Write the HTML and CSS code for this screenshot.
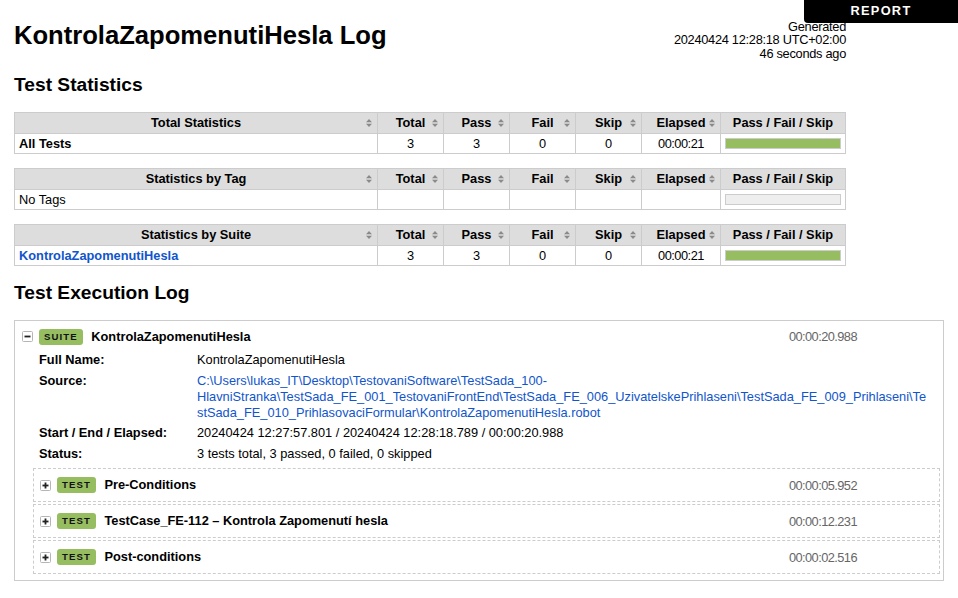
FILE: index.html
```html
<!DOCTYPE html>
<html lang="cs">
<head>
<meta charset="utf-8">
<title>KontrolaZapomenutiHesla Log</title>
<link rel="stylesheet" href="styles.css">
</head>
<body>
<div class="report-link"><a href="#">REPORT</a></div>

<div class="header">
  <h1>KontrolaZapomenutiHesla Log</h1>
  <div class="generated">Generated<br>20240424 12:28:18 UTC+02:00<br>46 seconds ago</div>
</div>

<h2>Test Statistics</h2>

<table class="statistics">
  <thead>
    <tr>
      <th class="sortable">Total Statistics<svg class="sort-icon" viewBox="0 0 6 8"><path d="M0 3.3L3 0 6 3.3Z M0 4.7L3 8 6 4.7Z"/></svg></th>
      <th class="sortable col-stat">Total<svg class="sort-icon" viewBox="0 0 6 8"><path d="M0 3.3L3 0 6 3.3Z M0 4.7L3 8 6 4.7Z"/></svg></th>
      <th class="sortable col-stat">Pass<svg class="sort-icon" viewBox="0 0 6 8"><path d="M0 3.3L3 0 6 3.3Z M0 4.7L3 8 6 4.7Z"/></svg></th>
      <th class="sortable col-stat">Fail<svg class="sort-icon" viewBox="0 0 6 8"><path d="M0 3.3L3 0 6 3.3Z M0 4.7L3 8 6 4.7Z"/></svg></th>
      <th class="sortable col-stat">Skip<svg class="sort-icon" viewBox="0 0 6 8"><path d="M0 3.3L3 0 6 3.3Z M0 4.7L3 8 6 4.7Z"/></svg></th>
      <th class="sortable col-elapsed">Elapsed<svg class="sort-icon" viewBox="0 0 6 8"><path d="M0 3.3L3 0 6 3.3Z M0 4.7L3 8 6 4.7Z"/></svg></th>
      <th class="col-graph">Pass / Fail / Skip</th>
    </tr>
  </thead>
  <tbody>
    <tr>
      <td class="stat-name"><span class="strong">All Tests</span></td>
      <td class="num">3</td>
      <td class="num">3</td>
      <td class="num">0</td>
      <td class="num">0</td>
      <td class="num time">00:00:21</td>
      <td class="graph-cell"><div class="graph"><div class="pass-bar" style="width:100%"></div></div></td>
    </tr>
  </tbody>
</table>

<table class="statistics">
  <thead>
    <tr>
      <th class="sortable">Statistics by Tag<svg class="sort-icon" viewBox="0 0 6 8"><path d="M0 3.3L3 0 6 3.3Z M0 4.7L3 8 6 4.7Z"/></svg></th>
      <th class="sortable col-stat">Total<svg class="sort-icon" viewBox="0 0 6 8"><path d="M0 3.3L3 0 6 3.3Z M0 4.7L3 8 6 4.7Z"/></svg></th>
      <th class="sortable col-stat">Pass<svg class="sort-icon" viewBox="0 0 6 8"><path d="M0 3.3L3 0 6 3.3Z M0 4.7L3 8 6 4.7Z"/></svg></th>
      <th class="sortable col-stat">Fail<svg class="sort-icon" viewBox="0 0 6 8"><path d="M0 3.3L3 0 6 3.3Z M0 4.7L3 8 6 4.7Z"/></svg></th>
      <th class="sortable col-stat">Skip<svg class="sort-icon" viewBox="0 0 6 8"><path d="M0 3.3L3 0 6 3.3Z M0 4.7L3 8 6 4.7Z"/></svg></th>
      <th class="sortable col-elapsed">Elapsed<svg class="sort-icon" viewBox="0 0 6 8"><path d="M0 3.3L3 0 6 3.3Z M0 4.7L3 8 6 4.7Z"/></svg></th>
      <th class="col-graph">Pass / Fail / Skip</th>
    </tr>
  </thead>
  <tbody>
    <tr>
      <td class="stat-name">No Tags</td>
      <td class="num"></td>
      <td class="num"></td>
      <td class="num"></td>
      <td class="num"></td>
      <td class="num"></td>
      <td class="graph-cell"><div class="graph empty"></div></td>
    </tr>
  </tbody>
</table>

<table class="statistics">
  <thead>
    <tr>
      <th class="sortable">Statistics by Suite<svg class="sort-icon" viewBox="0 0 6 8"><path d="M0 3.3L3 0 6 3.3Z M0 4.7L3 8 6 4.7Z"/></svg></th>
      <th class="sortable col-stat">Total<svg class="sort-icon" viewBox="0 0 6 8"><path d="M0 3.3L3 0 6 3.3Z M0 4.7L3 8 6 4.7Z"/></svg></th>
      <th class="sortable col-stat">Pass<svg class="sort-icon" viewBox="0 0 6 8"><path d="M0 3.3L3 0 6 3.3Z M0 4.7L3 8 6 4.7Z"/></svg></th>
      <th class="sortable col-stat">Fail<svg class="sort-icon" viewBox="0 0 6 8"><path d="M0 3.3L3 0 6 3.3Z M0 4.7L3 8 6 4.7Z"/></svg></th>
      <th class="sortable col-stat">Skip<svg class="sort-icon" viewBox="0 0 6 8"><path d="M0 3.3L3 0 6 3.3Z M0 4.7L3 8 6 4.7Z"/></svg></th>
      <th class="sortable col-elapsed">Elapsed<svg class="sort-icon" viewBox="0 0 6 8"><path d="M0 3.3L3 0 6 3.3Z M0 4.7L3 8 6 4.7Z"/></svg></th>
      <th class="col-graph">Pass / Fail / Skip</th>
    </tr>
  </thead>
  <tbody>
    <tr>
      <td class="stat-name"><a class="strong" href="#">KontrolaZapomenutiHesla</a></td>
      <td class="num">3</td>
      <td class="num">3</td>
      <td class="num">0</td>
      <td class="num">0</td>
      <td class="num time">00:00:21</td>
      <td class="graph-cell"><div class="graph"><div class="pass-bar" style="width:100%"></div></div></td>
    </tr>
  </tbody>
</table>

<h2>Test Execution Log</h2>

<div class="suite">
  <div class="element-header">
    <svg class="toggle" viewBox="0 0 11 11"><rect x="0.5" y="0.5" width="10" height="10" rx="1" class="toggle-box"/><rect x="2.5" y="4.6" width="6" height="1.8" class="toggle-mark"/></svg>
    <span class="label">SUITE</span>
    <span class="name">KontrolaZapomenutiHesla</span>
    <span class="elapsed">00:00:20.988</span>
  </div>
  <div class="children">
    <table class="metadata">
      <tbody>
        <tr><th>Full Name:</th><td>KontrolaZapomenutiHesla</td></tr>
        <tr><th>Source:</th><td><a href="#">C:\Users\lukas_IT\Desktop\TestovaniSoftware\TestSada_100-HlavniStranka\TestSada_FE_001_TestovaniFrontEnd\TestSada_FE_006_UzivatelskePrihlaseni\TestSada_FE_009_Prihlaseni\TestSada_FE_010_PrihlasovaciFormular\KontrolaZapomenutiHesla.robot</a></td></tr>
        <tr><th>Start / End / Elapsed:</th><td>20240424 12:27:57.801 / 20240424 12:28:18.789 / 00:00:20.988</td></tr>
        <tr><th>Status:</th><td>3 tests total, 3 passed, 0 failed, 0 skipped</td></tr>
      </tbody>
    </table>

    <div class="test">
      <div class="element-header">
        <svg class="toggle" viewBox="0 0 11 11"><rect x="0.5" y="0.5" width="10" height="10" rx="1" class="toggle-box"/><rect x="2.5" y="4.6" width="6" height="1.8" class="toggle-mark"/><rect x="4.6" y="2.5" width="1.8" height="6" class="toggle-mark"/></svg>
        <span class="label">TEST</span>
        <span class="name">Pre-Conditions</span>
        <span class="elapsed">00:00:05.952</span>
      </div>
    </div>
    <div class="test">
      <div class="element-header">
        <svg class="toggle" viewBox="0 0 11 11"><rect x="0.5" y="0.5" width="10" height="10" rx="1" class="toggle-box"/><rect x="2.5" y="4.6" width="6" height="1.8" class="toggle-mark"/><rect x="4.6" y="2.5" width="1.8" height="6" class="toggle-mark"/></svg>
        <span class="label">TEST</span>
        <span class="name">TestCase_FE-112 – Kontrola Zapomenutí hesla</span>
        <span class="elapsed">00:00:12.231</span>
      </div>
    </div>
    <div class="test">
      <div class="element-header">
        <svg class="toggle" viewBox="0 0 11 11"><rect x="0.5" y="0.5" width="10" height="10" rx="1" class="toggle-box"/><rect x="2.5" y="4.6" width="6" height="1.8" class="toggle-mark"/><rect x="4.6" y="2.5" width="1.8" height="6" class="toggle-mark"/></svg>
        <span class="label">TEST</span>
        <span class="name">Post-conditions</span>
        <span class="elapsed">00:00:02.516</span>
      </div>
    </div>
  </div>
</div>
</body>
</html>
```

FILE: styles.css
```css
body {
  margin: 8px;
  padding: 6px;
  font-family: "Liberation Sans", Arial, Helvetica, sans-serif;
  font-size: 12.8px;
  color: #000;
  background: #fff;
}

a {
  color: #15c;
  text-decoration: none;
}

.strong {
  font-weight: bold;
}

/* report link */
.report-link {
  position: absolute;
  top: 0;
  right: 0;
  width: 154px;
}

.report-link a {
  display: block;
  background: #000;
  color: #fff;
  font-weight: bold;
  letter-spacing: 0.1em;
  text-align: center;
  line-height: 15px;
  padding: 3px 0 5px;
  border-bottom-left-radius: 4px;
}

/* header */
.header {
  display: flex;
  justify-content: space-between;
  align-items: flex-start;
  width: 832px;
  height: 44px;
}

h1 {
  margin: 7px 0 0;
  font-size: 25.6px;
  font-weight: bold;
}

.generated {
  margin-top: 5.5px;
  text-align: right;
  font-size: 12.8px;
  letter-spacing: -0.28px;
  line-height: 13.5px;
  white-space: nowrap;
}

h2 {
  margin: 16px 0;
  font-size: 19.2px;
  font-weight: bold;
}

/* statistics */
.statistics {
  width: 832px;
  border-collapse: collapse;
  table-layout: fixed;
  margin-bottom: 14px;
}

.statistics th,
.statistics td {
  border: 1px solid #ccc;
}

.statistics th {
  position: relative;
  background: #ddd;
  padding: 2px 4px;
  line-height: 16px;
  font-weight: bold;
  text-align: center;
}

.statistics td {
  padding: 2px 4px;
  line-height: 15px;
  vertical-align: middle;
}

.col-stat {
  width: 57px;
}

.col-elapsed {
  width: 70px;
}

.col-graph {
  width: 116px;
}

.sort-icon {
  position: absolute;
  right: 5px;
  top: 50%;
  width: 6px;
  height: 8px;
  margin-top: -4px;
  fill: #8a8a8a;
}

.num {
  text-align: center;
}

.time {
  letter-spacing: -0.5px;
}

.graph-cell {
  padding: 0 5px;
}

.graph {
  height: 9px;
  border: 1px solid #ccc;
}

.graph.empty {
  background: #eee;
}

.pass-bar {
  height: 100%;
  background: #97bd61;
}

/* execution log */
.suite {
  border: 1px solid #ccc;
  padding: 0 3px 4px 0;
}

.element-header {
  display: flex;
  align-items: center;
  box-sizing: border-box;
}

.suite > .element-header {
  height: 28.75px;
  padding: 2.25px 83px 0 7px;
}

.test {
  border: 1px dashed #ccc;
  margin-bottom: 2px;
}

.test > .element-header {
  height: 32px;
  padding: 0 82px 0 6px;
}

.toggle {
  flex: none;
  width: 11px;
  height: 11px;
  margin-right: 6px;
}

.toggle-box {
  fill: #fff;
  stroke: #b5b5b5;
}

.toggle-mark {
  fill: #222;
}

.label {
  display: inline-block;
  padding: 2px 5px;
  font-size: 9.6px;
  line-height: 12px;
  font-weight: bold;
  letter-spacing: 1.1px;
  border-radius: 3px;
  background: #97bd61;
  color: #111;
  margin-right: 8.5px;
}

.name {
  font-weight: bold;
  line-height: 16px;
  white-space: nowrap;
}

.elapsed {
  margin-left: auto;
  font-size: 12.8px;
  letter-spacing: -0.55px;
  color: #666;
}

.children {
  margin-left: 18px;
}

.metadata {
  width: 100%;
  border-collapse: collapse;
  table-layout: fixed;
  margin-bottom: 4.25px;
}

.metadata th {
  width: 158px;
  padding: 2.25px 0 2.25px 6px;
  text-align: left;
  vertical-align: top;
  line-height: 16px;
  font-weight: bold;
}

.metadata td {
  padding: 2.25px 10px 2.25px 0;
  line-height: 16px;
  vertical-align: top;
  overflow-wrap: break-word;
}
```
